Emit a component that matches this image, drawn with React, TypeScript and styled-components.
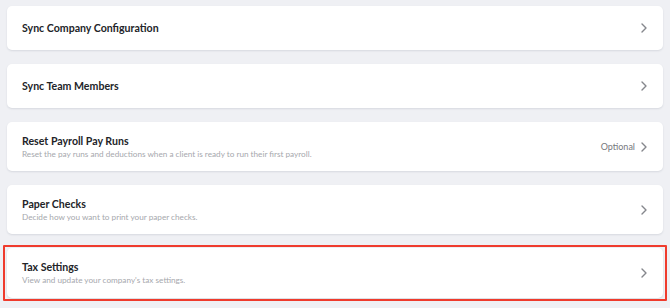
import React from "react";
import styled, { createGlobalStyle } from "styled-components";

const Global = createGlobalStyle`
  html, body { margin: 0; padding: 0; background: #eff0f4; }
  body { font-family: Lato, "Open Sans", sans-serif; }
`;

const Page = styled.div`
  width: 670px;
  height: 308px;
  box-sizing: border-box;
  padding: 6px 7px 0 7px;
  display: flex;
  flex-direction: column;
  gap: 14px;
  background: #eff0f4;
`;

const Card = styled.div<{ $h: number; $highlight?: boolean }>`
  position: relative;
  height: ${(p) => p.$h}px;
  box-sizing: border-box;
  background: #ffffff;
  border-radius: 5px;
  box-shadow: 0 1px 2px rgba(40, 50, 70, 0.12);
  display: flex;
  align-items: center;
  padding: 0 16px 0 15px;

  &::after {
    content: "";
    display: ${(p) => (p.$highlight ? "block" : "none")};
    position: absolute;
    inset: -3px -4px -3px -4px;
    border: 2px solid #ef3b2d;
    border-radius: 1px;
    pointer-events: none;
  }
`;

const TextCol = styled.div`
  flex: 1;
  display: flex;
  flex-direction: column;
  gap: 1px;
`;

const Title = styled.div`
  font-size: 10.6px;
  font-weight: 700;
  color: #222428;
  line-height: 13px;
`;

const Sub = styled.div`
  font-size: 8.2px;
  color: #a6a8ad;
  line-height: 10px;
`;

const Right = styled.div`
  display: flex;
  align-items: center;
  gap: 6px;
`;

const Tag = styled.span`
  font-size: 9px;
  color: #76787d;
`;

const Chevron = () => (
  <svg width="6" height="10" viewBox="0 0 6 10" fill="none">
    <path d="M1 1l4 4-4 4" stroke="#85878c" strokeWidth="1.4" strokeLinecap="round" strokeLinejoin="round" />
  </svg>
);

const items = [
  { title: "Sync Company Configuration", h: 44 },
  { title: "Sync Team Members", h: 44 },
  {
    title: "Reset Payroll Pay Runs",
    sub: "Reset the pay runs and deductions when a client is ready to run their first payroll.",
    tag: "Optional",
    h: 49,
  },
  { title: "Paper Checks", sub: "Decide how you want to print your paper checks.", h: 49 },
  {
    title: "Tax Settings",
    sub: "View and update your company's tax settings.",
    h: 50,
    highlight: true,
  },
];

export default function App() {
  return (
    <>
      <Global />
      <Page>
        {items.map((it) => (
          <Card key={it.title} $h={it.h} $highlight={it.highlight}>
            <TextCol>
              <Title>{it.title}</Title>
              {it.sub && <Sub>{it.sub}</Sub>}
            </TextCol>
            <Right>
              {it.tag && <Tag>{it.tag}</Tag>}
              <Chevron />
            </Right>
          </Card>
        ))}
      </Page>
    </>
  );
}
